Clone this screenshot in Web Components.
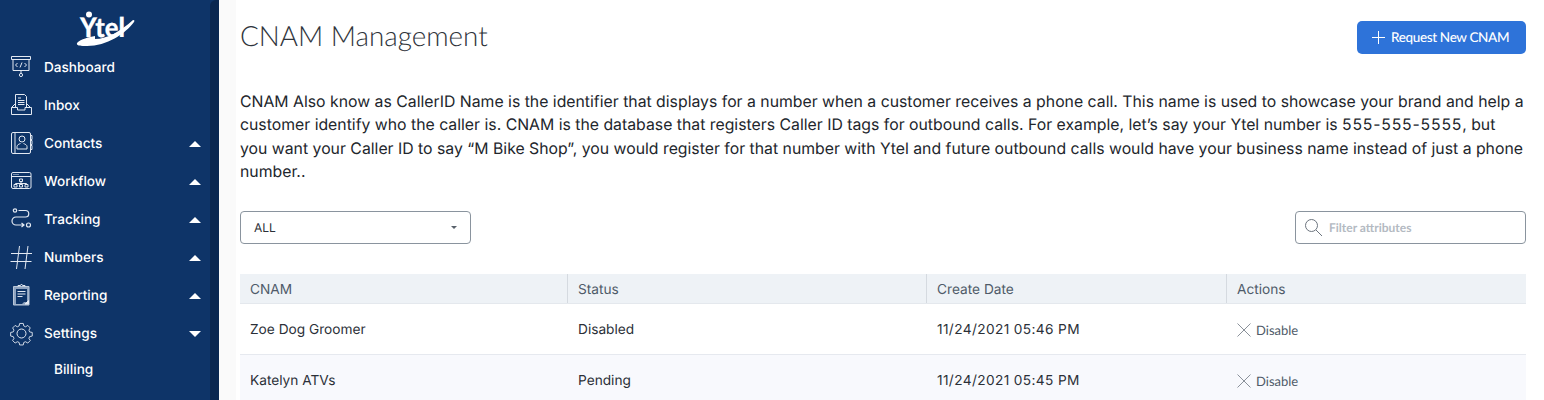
<!DOCTYPE html>
<html lang="en">
<head>
<meta charset="utf-8">
<title>CNAM Management</title>
<style>
  html, body { margin: 0; height: 100%; background: #fff; overflow: hidden; }
  body { font-family: Inter, "Liberation Sans", sans-serif; text-rendering: geometricPrecision; }
  app-shell { height: 400px; }
  .digits { letter-spacing: .8px; }
</style>
</head>
<body>
<app-shell>
  <side-bar slot="side">
    <nav-item label="Dashboard"><svg slot="icon" width="30" height="26" viewBox="0 0 30 26" fill="none" stroke="#e3e9f2" stroke-width="1"><path d="M1.500 1.500h19v3h-19zM3 4.500v11h16v-11M11 15.500v3"/><circle cx="11" cy="20" r="1.600"/><path d="M7.500 8l-2 2 2 2M14.500 8l2 2-2 2M12 7.500l-2 5"/></svg></nav-item>
    <nav-item label="Inbox"><svg slot="icon" width="30" height="26" viewBox="0 0 30 26" fill="none" stroke="#e3e9f2" stroke-width="1"><path d="M1.500 14.500l4-4M20.500 14.500l-4-4M1.500 14.500v7h20v-7h-6.500v2.500h-7.500v-2.500zM5.500 14V1.500h9l2 2V14M8 5h3M8 7.500h6.500M8 9.500h6.500M8 11.500h6.500"/></svg></nav-item>
    <nav-item label="Contacts" caret="up"><svg slot="icon" width="30" height="26" viewBox="0 0 30 26" fill="none" stroke="#e3e9f2" stroke-width="1"><path d="M3 1.500h16a1.500 1.500 0 0 1 1.500 1.500v18a1.500 1.500 0 0 1-1.500 1.500H3A1.500 1.500 0 0 1 1.500 21V3A1.500 1.500 0 0 1 3 1.500zM5 1.500v21M20.500 4.500h1.500v4h-1.500M20.500 9.500h1.500v4h-1.500M20.500 14.500h1.500v4h-1.500"/><circle cx="12" cy="8" r="3"/><path d="M7 18v-2.500c0-1.500 2-2.500 3.500-3M17 18v-2.500c0-1.500-2-2.500-3.500-3M7 18h10"/></svg></nav-item>
    <nav-item label="Workflow" caret="up"><svg slot="icon" width="30" height="26" viewBox="0 0 30 26" fill="none" stroke="#e3e9f2" stroke-width="1"><rect x="1.500" y="3.500" width="19.500" height="16" rx="1.500"/><path d="M1.500 7.500h19.500M9.500 10h3v2.500h-3zM11 12.500v2M5.500 14.500h11M5.500 14.500v1M11 14.500v1M16.500 14.500v1M4 15.500h3v2.500h-3zM9.500 15.500h3v2.500h-3zM15 15.500h3v2.500h-3z"/><path d="M3.500 5.500h1M5.500 5.500h1M7.500 5.500h1"/></svg></nav-item>
    <nav-item label="Tracking" caret="up"><svg slot="icon" width="30" height="26" viewBox="0 0 30 26" fill="none" stroke="#e3e9f2" stroke-width="1.200"><circle cx="5" cy="3.500" r="1.700"/><circle cx="18.500" cy="18" r="2"/><path d="M8.500 3.500h7a3 3 0 0 1 0 6.500h-9.500a3.800 3.800 0 0 0 0 8h8M11.500 16l2.500 2-2.500 2"/></svg></nav-item>
    <nav-item label="Numbers" caret="up"><svg slot="icon" width="30" height="26" viewBox="0 0 30 26" fill="none" stroke="#e3e9f2" stroke-width="1"><path d="M9.500 1l-3 23M18 1l-3 23M1 8.500h21M0.500 16.500h21"/></svg></nav-item>
    <nav-item label="Reporting" caret="up"><svg slot="icon" width="30" height="26" viewBox="0 0 30 26" fill="none" stroke="#e3e9f2" stroke-width="1"><path d="M3.500 3.500h15.500v18.500h-15.500z" fill="#8ea3bf" stroke="#b9c6d8"/><path d="M6 6h11v13h-3l-2 2h-6z" fill="#0e3468" stroke="none"/><path d="M8 3.500v-1h2.500l1-1.500 1 1.500h2.500v1M7.500 8.500h8M7.500 11h8M7.500 13.500h5"/><path d="M15 21l3.500-3.500v3.500z" fill="#e3e9f2"/></svg></nav-item>
    <nav-item label="Settings" caret="down"><svg slot="icon" width="30" height="26" viewBox="0 0 30 26" fill="none" stroke="#e3e9f2" stroke-width="1"><circle cx="11.500" cy="12.500" r="4.500"/><path d="M9.500 1.500h4l.6 2.800 2 .9 2.400-1.500 2.800 2.800-1.500 2.400.8 2 2.900.6v4l-2.900.6-.8 2 1.500 2.400-2.800 2.800-2.400-1.500-2 .8-.6 2.800h-4l-.6-2.800-2-.8-2.400 1.500-2.800-2.800 1.500-2.400-.8-2-2.900-.6v-4l2.900-.6.8-2-1.500-2.400 2.800-2.800 2.400 1.500 2-.9z" transform="translate(1.100 1.100) scale(.9)"/></svg></nav-item>
    <nav-item label="Billing" sub></nav-item>
  </side-bar>
  <page-header heading="CNAM Management" action="Request New CNAM"></page-header>
  <intro-text>CNAM Also know as CallerID Name is the identifier that displays for a number when a customer receives a phone call. This name is used to showcase your brand and help a<br>customer identify who the caller is. CNAM is the database that registers Caller ID tags for outbound calls. For example, let’s say your Ytel number is <span class="digits">555-555-5555</span>, but<br>you want your Caller ID to say “M Bike Shop”, you would register for that number with Ytel and future outbound calls would have your business name instead of just a phone<br>number..</intro-text>
  <filter-bar value="ALL" placeholder="Filter attributes"></filter-bar>
  <cnam-table>
    <cnam-row name="Zoe Dog Groomer" status="Disabled" created="11/24/2021 05:46 PM"></cnam-row>
    <cnam-row name="Katelyn ATVs" status="Pending" created="11/24/2021 05:45 PM" alt></cnam-row>
  </cnam-table>
</app-shell>

<script>
// small helper so each element only has to hand over its markup
function shadowOf(el, html) {
  const root = el.attachShadow({ mode: 'open' });
  root.innerHTML = html;
  return root;
}

class AppShell extends HTMLElement {
  constructor() {
    super();
    shadowOf(this, `
      <style>
        :host { display: flex; background: #fff; overflow: hidden; }
        .rail { width: 9px; background: #0e3468; flex: none; }
        .track { height: 100%; background: #0a2750; border-radius: 6px 0 0 0; }
        .gutter { width: 17px; background: #fafafa; flex: none; }
        main { flex: 1; min-width: 0; padding: 0 18px 0 4px; }
      </style>
      <slot name="side"></slot>
      <div class="rail"><div class="track"></div></div>
      <div class="gutter"></div>
      <main><slot></slot></main>`);
  }
}

class SideBar extends HTMLElement {
  constructor() {
    super();
    shadowOf(this, `
      <style>
        :host { display: block; width: 210px; flex: none; background: #0e3468; color: #fff; }
        .logo { display: flex; justify-content: center; height: 49px; }
      </style>
      <div class="logo">
        <svg width="60" height="49" viewBox="0 0 60 49">
          <circle cx="14" cy="14.500" r="3" fill="#fff"/>
          <text x="5" y="37" font-family="Lato, sans-serif" font-weight="900" font-size="27" fill="#fff" stroke="#fff" stroke-width=".2" textLength="45" lengthAdjust="spacingAndGlyphs">Ytel</text>
          <path d="M2 43C6 39 14 37 20 36L20 39C32 39 46 31 58 20C60 20 59.500 21 59 22C50 34 32 46 12 46C6 46 1 46 2 43z" fill="#fff"/>
        </svg>
      </div>
      <slot></slot>`);
  }
}

class NavItem extends HTMLElement {
  constructor() {
    super();
    const caret = this.getAttribute('caret');
    const sub = this.hasAttribute('sub');
    shadowOf(this, `
      <style>
        :host { display: flex; align-items: center; height: 38px; font: 500 13.600px Inter, sans-serif; color: #fff; }
        :host([sub]) { height: 34px; }
        .icon { width: 44px; flex: none; display: flex; padding-left: 10px; box-sizing: border-box; }
        .sub { padding-left: 54px; }
        .label { flex: 1; }
        .caret { width: 0; height: 0; border: 6px solid transparent; margin-right: 9px; }
        .up { border-bottom: 6px solid #fff; border-top-width: 0; }
        .down { border-top: 6px solid #fff; border-bottom-width: 0; }
      </style>
      ${sub ? '' : '<div class="icon"><slot name="icon"></slot></div>'}
      <div class="label ${sub ? 'sub' : ''}">${this.getAttribute('label')}</div>
      ${caret ? `<div class="caret ${caret}"></div>` : ''}`);
  }
}

class PageHeader extends HTMLElement {
  constructor() {
    super();
    shadowOf(this, `
      <style>
        :host { display: flex; justify-content: space-between; align-items: center; padding-top: 14px; height: 46px; }
        h1 { margin: -4px 0 0; font: 300 27.800px Lato, sans-serif; color: #2f343b; }
        button { display: flex; align-items: center; gap: 6px; height: 33px; width: 169px; border: 0; border-radius: 5px; background: #2e73d9; color: #fff; font: 500 13.500px Lato, sans-serif; letter-spacing: -.35px; padding: 0 0 0 15px; text-rendering: geometricPrecision; }
      </style>
      <h1>${this.getAttribute('heading')}</h1>
      <button><svg width="13" height="13" viewBox="0 0 13 13" stroke="#fff" stroke-width="1" fill="none"><path d="M6.500 0v13M0 6.500h13"/></svg>${this.getAttribute('action')}</button>`);
  }
}

class IntroText extends HTMLElement {
  constructor() {
    super();
    shadowOf(this, `
      <style>
        :host { display: block; margin-top: 30px; font: 400 15.800px/23.300px Inter, sans-serif; color: #22262c; }
      </style>
      <slot></slot>`);
  }
}

class FilterBar extends HTMLElement {
  constructor() {
    super();
    shadowOf(this, `
      <style>
        :host { display: flex; justify-content: space-between; margin-top: 28px; }
        .box { width: 231px; height: 33px; box-sizing: border-box; border: 1px solid #8a949e; border-radius: 4px; display: flex; align-items: center; }
        .select { padding: 0 13px 0 13px; justify-content: space-between; font: 400 12px Inter, sans-serif; color: #2b3038; }
        .tri { border: 3.500px solid transparent; border-top: 3.500px solid #59616b; border-bottom-width: 0; }
        .search { padding-left: 8px; gap: 6px; font: 700 12px Lato, sans-serif; color: #b4bac2; }
      </style>
      <div class="box select"><span>${this.getAttribute('value')}</span><span class="tri"></span></div>
      <div class="box search"><svg width="19" height="19" viewBox="0 0 19 19" fill="none" stroke="#6c747e" stroke-width="1"><circle cx="7.500" cy="7.500" r="6"/><path d="M12 12l6 6"/></svg><span>${this.getAttribute('placeholder')}</span></div>`);
  }
}

const COLUMNS = 'grid-template-columns: 328px 359px 300px 299px;';

class CnamTable extends HTMLElement {
  constructor() {
    super();
    shadowOf(this, `
      <style>
        :host { display: block; margin-top: 30px; }
        .head { display: grid; ${COLUMNS} height: 29px; background: #eef2f6; border-bottom: 1px solid #e4e8ed; font: 400 13.700px Inter, sans-serif; color: #4f5b69; }
        .head div { display: flex; align-items: center; padding: 3px 0 0 10px; }
        .head div + div { border-left: 1px solid #d5dae0; margin-left: -1px; }
      </style>
      <div class="head"><div>CNAM</div><div>Status</div><div>Create Date</div><div>Actions</div></div>
      <slot></slot>`);
  }
}

class CnamRow extends HTMLElement {
  constructor() {
    super();
    shadowOf(this, `
      <style>
        :host { display: grid; ${COLUMNS} height: 50px; align-items: center; border-bottom: 1px solid #e6e9ef; font: 400 13.700px Inter, sans-serif; color: #2b3038; }
        :host([alt]) { background: #f8f9fd; }
        div { padding: 2px 0 0 10px; }
        .date { letter-spacing: .37px; }
        .act { display: flex; align-items: center; gap: 5px; font: 400 13px Lato, sans-serif; color: #4f5b69; padding-top: 0; margin-top: 2px; }
      </style>
      <div>${this.getAttribute('name')}</div>
      <div>${this.getAttribute('status')}</div>
      <div class="date">${this.getAttribute('created')}</div>
      <div class="act"><svg width="14" height="14" viewBox="0 0 14 14" stroke="#8a919a" stroke-width="1" fill="none"><path d="M0.500 0.500l13 13M13.500 0.500l-13 13"/></svg>Disable</div>`);
  }
}

customElements.define('app-shell', AppShell);
customElements.define('side-bar', SideBar);
customElements.define('nav-item', NavItem);
customElements.define('page-header', PageHeader);
customElements.define('intro-text', IntroText);
customElements.define('filter-bar', FilterBar);
customElements.define('cnam-table', CnamTable);
customElements.define('cnam-row', CnamRow);
</script>
</body>
</html>
